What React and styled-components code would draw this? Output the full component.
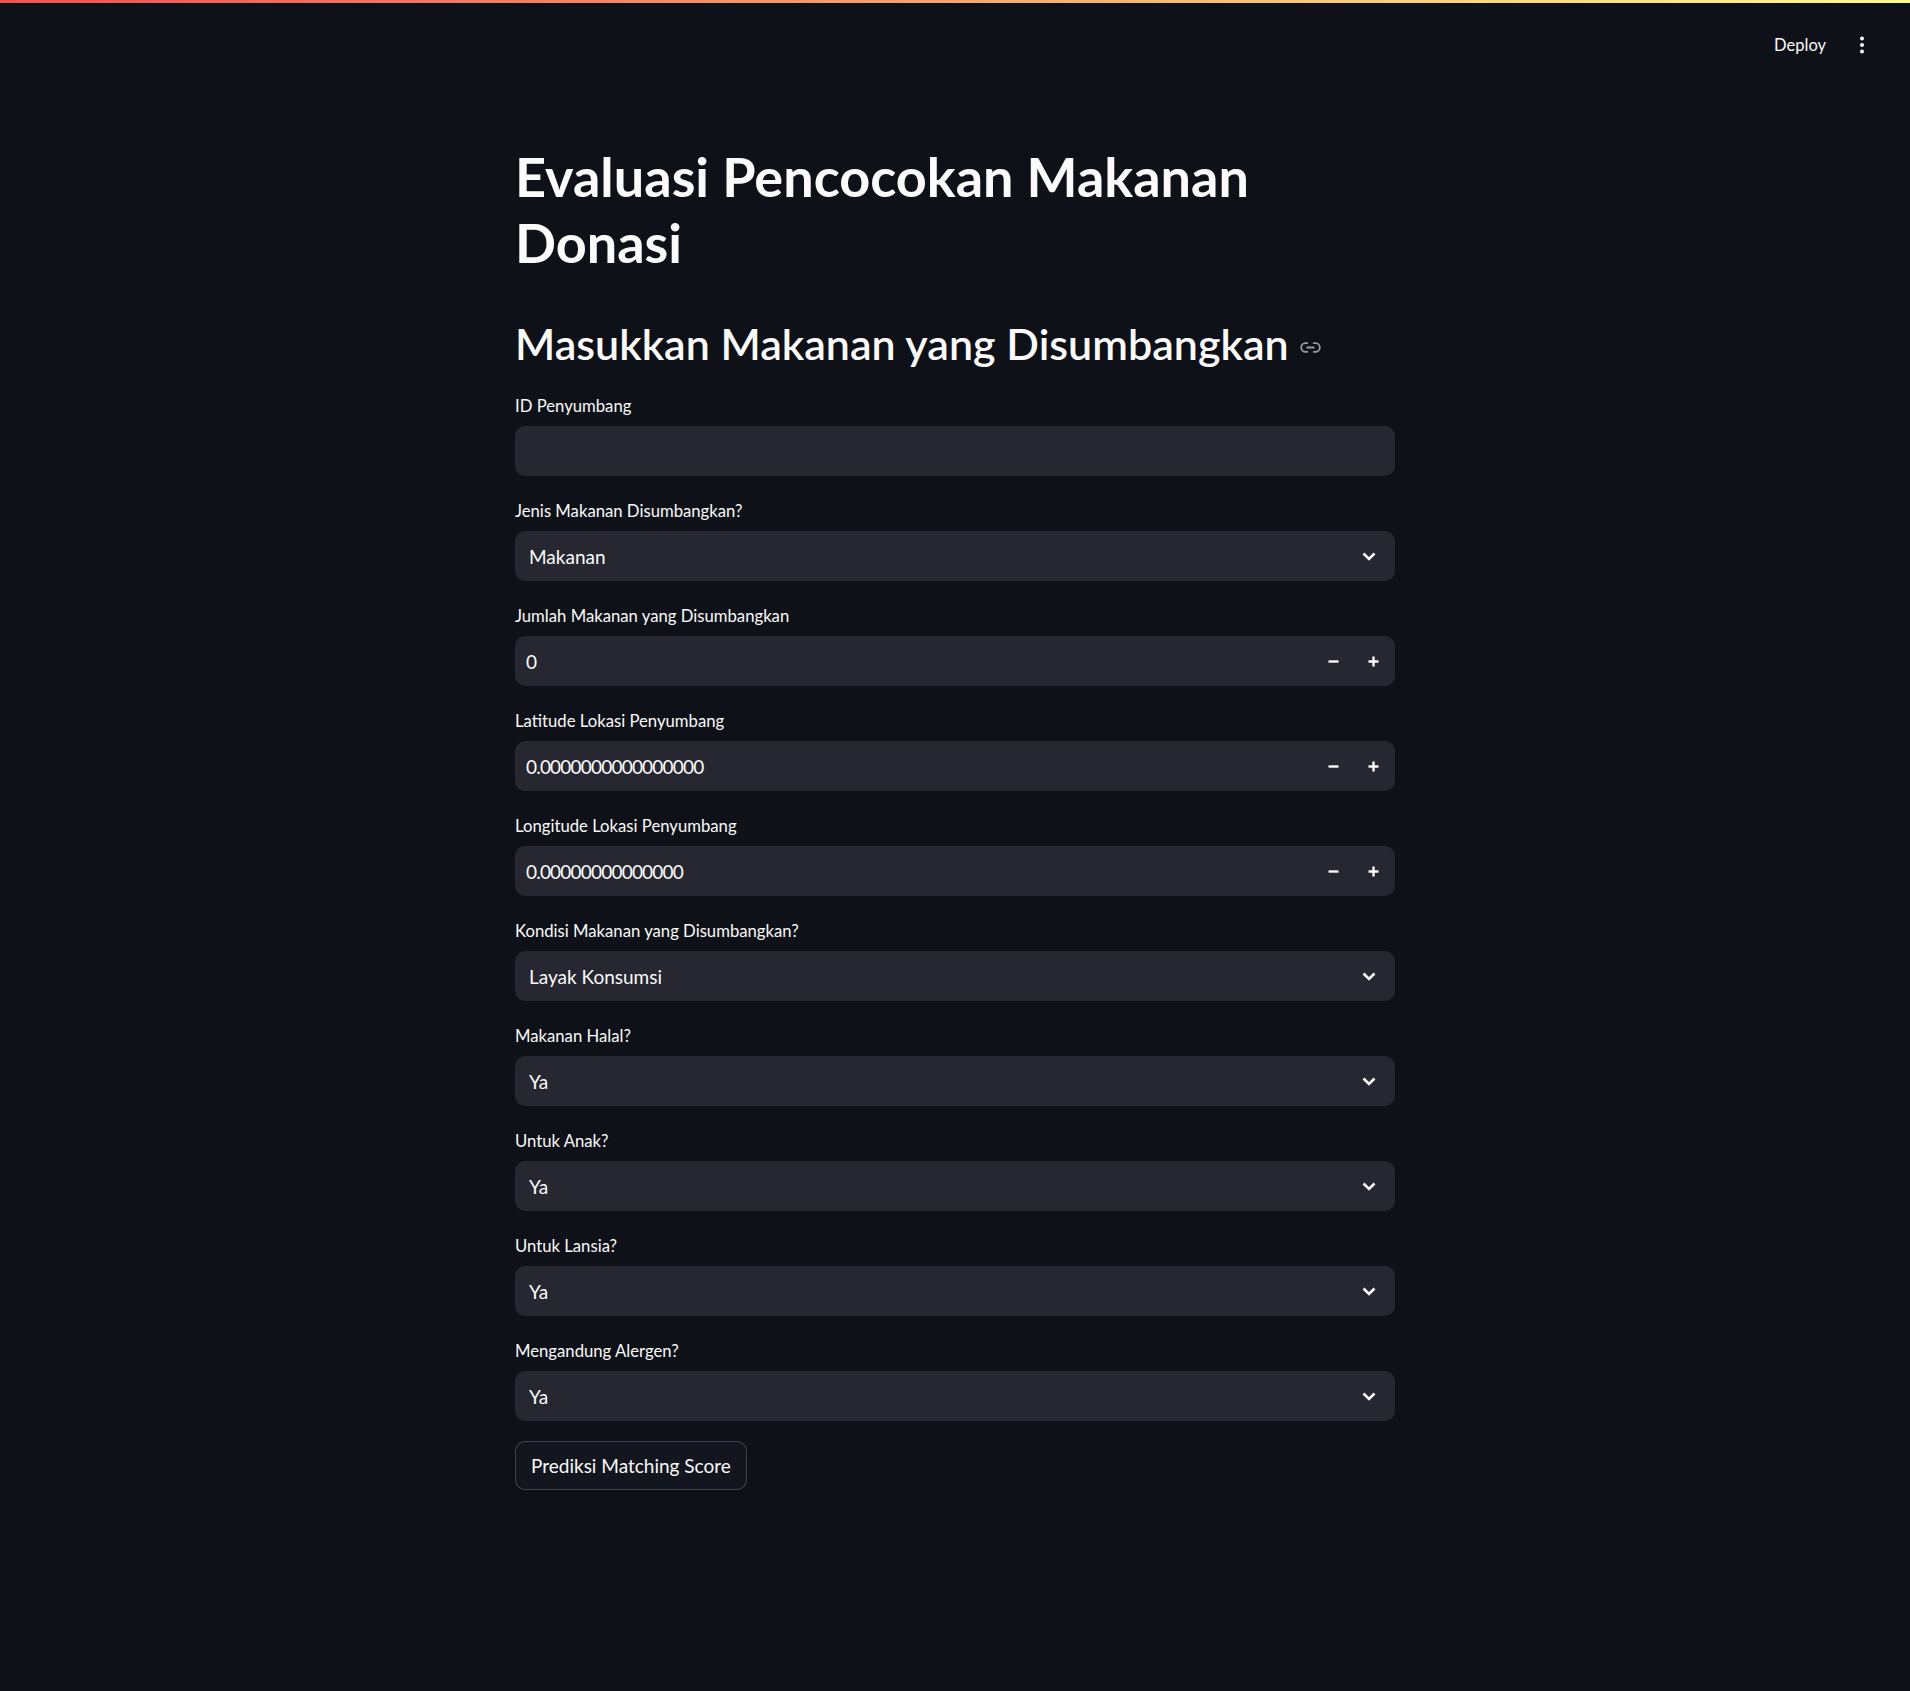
import React from 'react';
import styled, { createGlobalStyle } from 'styled-components';

const GlobalStyle = createGlobalStyle`
  body {
    margin: 0;
    background: #0e1117;
    color: #fafafa;
    font-family: Lato, "Liberation Sans", sans-serif;
  }
`;

const Page = styled.div`
  min-height: 1691px;
  background: #0e1117;
`;

const Decoration = styled.div`
  height: 3px;
  background: linear-gradient(90deg, #ff4b4b, #fffd80);
`;

const Header = styled.header`
  height: 84px;
  display: flex;
  align-items: center;
  justify-content: flex-end;
  padding-right: 28px;
  gap: 14px;
`;

const DeployButton = styled.button`
  background: transparent;
  border: none;
  color: #fafafa;
  font-family: inherit;
  font-size: 16.5px;
  padding: 6px 2px;
  cursor: pointer;
`;

const MenuButton = styled.button`
  width: 40px;
  height: 40px;
  background: transparent;
  border: none;
  display: flex;
  align-items: center;
  justify-content: center;
  padding: 0;
  cursor: pointer;
`;

const Main = styled.main`
  width: 880px;
  margin: 0 auto;
  padding-top: 57px;
`;

const Title = styled.h1`
  margin: 0;
  font-size: 54px;
  line-height: 66px;
  font-weight: 700;
`;

const Subtitle = styled.h2`
  margin: 41px 0 20px;
  font-size: 43px;
  line-height: 54px;
  font-weight: 600;
  display: flex;
  align-items: center;
  gap: 11px;
`;

const Anchor = styled.span`
  display: flex;
  margin-top: 7px;
`;

const Field = styled.div`
  margin-bottom: 20px;
`;

const Label = styled.label`
  display: flex;
  align-items: center;
  height: 30px;
  margin-bottom: 5px;
  font-size: 16.7px;
`;

const Box = styled.div`
  height: 50px;
  background: #262730;
  border-radius: 10px;
  display: flex;
  align-items: center;
  box-sizing: border-box;
  padding: ${(p) => (p.$number ? '0 2px 0 11px' : '0 19px 0 14px')};
  font-size: 19px;
`;

const Value = styled.span`
  flex: 1;
  letter-spacing: ${(p) => (p.$number ? '-0.8px' : 'normal')};
`;

const StepButton = styled.button`
  width: 40px;
  height: 50px;
  background: transparent;
  border: none;
  display: flex;
  align-items: center;
  justify-content: center;
  padding: 0;
`;

const PrimaryButton = styled.button`
  height: 49px;
  padding: 0 15px;
  background: #13161e;
  color: #fafafa;
  border: 1px solid rgba(250, 250, 250, 0.2);
  border-radius: 10px;
  font-family: inherit;
  font-size: 19px;
  cursor: pointer;
`;

const Chevron = () => (
  <svg width="14" height="9" viewBox="0 0 14 9">
    <path d="M1.5 1.5 L7 7 L12.5 1.5" fill="none" stroke="#fafafa" strokeWidth="2.6" />
  </svg>
);

const LinkIcon = () => (
  <svg width="21" height="11" viewBox="0 0 21 11">
    <path
      d="M8 1.2 H5.5 a4.3 4.3 0 0 0 0 8.6 H8 M13 1.2 H15.5 a4.3 4.3 0 0 1 0 8.6 H13 M6.5 5.5 H14.5"
      fill="none"
      stroke="#9a9ba0"
      strokeWidth="1.8"
    />
  </svg>
);

const Minus = () => (
  <svg width="11" height="11" viewBox="0 0 11 11">
    <path d="M0.5 5.5 H10.5" stroke="#fafafa" strokeWidth="2.4" />
  </svg>
);

const Plus = () => (
  <svg width="11" height="11" viewBox="0 0 11 11">
    <path d="M0.5 5.5 H10.5 M5.5 0.5 V10.5" stroke="#fafafa" strokeWidth="2.4" />
  </svg>
);

const fields = [
  { label: 'ID Penyumbang', type: 'text', value: '' },
  { label: 'Jenis Makanan Disumbangkan?', type: 'select', value: 'Makanan' },
  { label: 'Jumlah Makanan yang Disumbangkan', type: 'number', value: '0' },
  { label: 'Latitude Lokasi Penyumbang', type: 'number', value: '0.0000000000000000' },
  { label: 'Longitude Lokasi Penyumbang', type: 'number', value: '0.00000000000000' },
  { label: 'Kondisi Makanan yang Disumbangkan?', type: 'select', value: 'Layak Konsumsi' },
  { label: 'Makanan Halal?', type: 'select', value: 'Ya' },
  { label: 'Untuk Anak?', type: 'select', value: 'Ya' },
  { label: 'Untuk Lansia?', type: 'select', value: 'Ya' },
  { label: 'Mengandung Alergen?', type: 'select', value: 'Ya' },
];

function App() {
  return (
    <Page>
      <GlobalStyle />
      <Decoration />
      <Header>
        <DeployButton>Deploy</DeployButton>
        <MenuButton aria-label="menu">
          <svg width="4" height="18" viewBox="0 0 4 18">
            <circle cx="2" cy="2.5" r="2" fill="#fafafa" />
            <circle cx="2" cy="9" r="2" fill="#fafafa" />
            <circle cx="2" cy="15.5" r="2" fill="#fafafa" />
          </svg>
        </MenuButton>
      </Header>
      <Main>
        <Title>Evaluasi Pencocokan Makanan Donasi</Title>
        <Subtitle>
          Masukkan Makanan yang Disumbangkan
          <Anchor><LinkIcon /></Anchor>
        </Subtitle>
        {fields.map((f) => {
          const isNumber = f.type === 'number';
          return (
            <Field key={f.label}>
              <Label>{f.label}</Label>
              <Box $number={isNumber}>
                <Value $number={isNumber}>{f.value}</Value>
                {f.type === 'select' && <Chevron />}
                {isNumber && (
                  <>
                    <StepButton><Minus /></StepButton>
                    <StepButton><Plus /></StepButton>
                  </>
                )}
              </Box>
            </Field>
          );
        })}
        <PrimaryButton>Prediksi Matching Score</PrimaryButton>
      </Main>
    </Page>
  );
}

export default App;
